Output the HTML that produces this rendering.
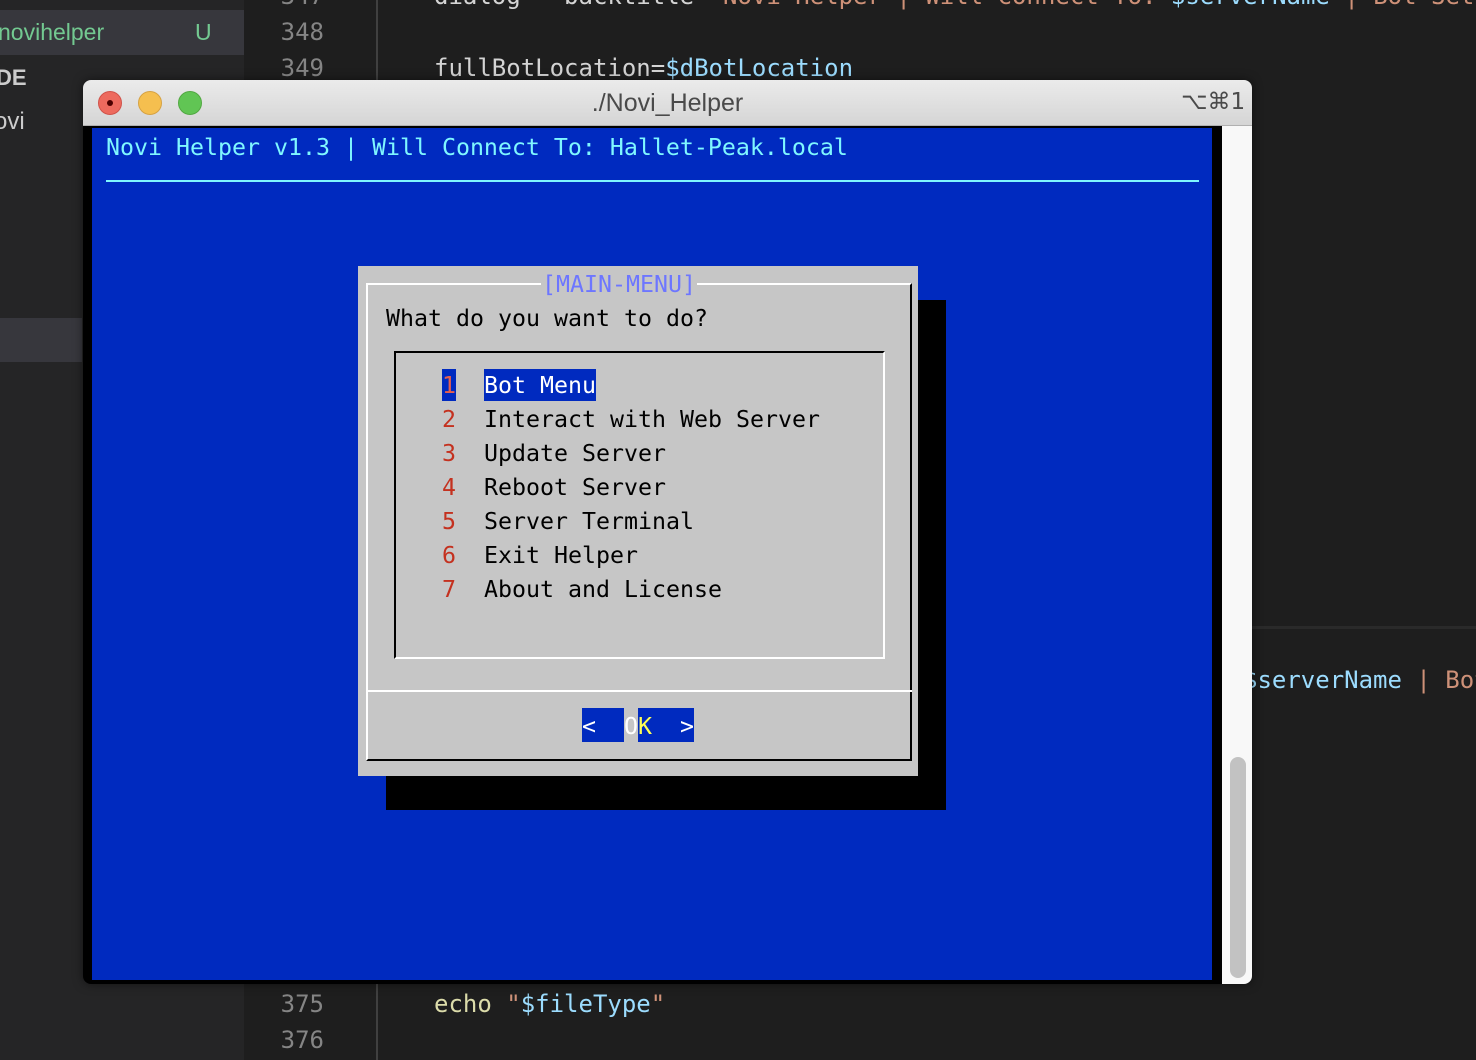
<!DOCTYPE html>
<html><head><meta charset="utf-8"><style>
*{margin:0;padding:0;box-sizing:border-box}
body{width:1476px;height:1060px;background:#1e1e1e;position:relative;overflow:hidden;font-family:"DejaVu Sans Mono","Liberation Mono",monospace}
.a{position:absolute;white-space:pre}
.code{font-size:24px;line-height:36px;color:#d4d4d4}
.ln{font-size:24px;line-height:36px;color:#858585;text-align:right;width:80px}
.t{font-size:23.25px;line-height:34px}
</style></head><body>
<div class="a" style="left:0;top:0;width:244px;height:1060px;background:#252526"></div>
<div class="a" style="left:0;top:10px;width:244px;height:45px;background:#37373d"></div>
<div class="a" style="left:0;top:318px;width:82px;height:44px;background:#37373d"></div>
<div class="a" style="left:-2px;top:19px;font-family:'Liberation Sans',sans-serif;font-size:23px;color:#73c991">novihelper</div>
<div class="a" style="left:195px;top:19px;font-family:'Liberation Sans',sans-serif;font-size:23px;color:#73c991">U</div>
<div class="a" style="left:-4px;top:65px;font-family:'Liberation Sans',sans-serif;font-size:22px;font-weight:bold;color:#ccc">DE</div>
<div class="a" style="left:-6px;top:108px;font-family:'Liberation Sans',sans-serif;font-size:24px;color:#ccc">ovi</div>
<div class="a" style="left:376px;top:0;width:2px;height:1060px;background:#404040"></div>
<div class="a ln" style="left:244px;top:-22px">347</div>
<div class="a ln" style="left:244px;top:14px">348</div>
<div class="a ln" style="left:244px;top:50px">349</div>
<div class="a ln" style="left:244px;top:986px">375</div>
<div class="a ln" style="left:244px;top:1022px">376</div>
<div class="a code" style="left:434px;top:-22px">dialog --backtitle <span style="color:#ce9178">"Novi Helper | Will Connect To: </span><span style="color:#9cdcfe">$serverName</span><span style="color:#ce9178"> | Bot Set</span></div>
<div class="a code" style="left:434px;top:50px">fullBotLocation=<span style="color:#9cdcfe">$dBotLocation</span></div>
<div class="a code" style="left:434px;top:986px"><span style="color:#dcdcaa">echo</span> <span style="color:#ce9178">"</span><span style="color:#9cdcfe">$fileType</span><span style="color:#ce9178">"</span></div>
<div class="a" style="left:1240px;top:626px;width:236px;height:3px;background:#2a2a2a"></div>
<div class="a code" style="left:1243px;top:662px"><span style="color:#9cdcfe">$serverName</span><span style="color:#ce9178"> | Bot</span></div>

<div class="a" style="left:83px;top:80px;width:1169px;height:904px;border-radius:8px;background:#000;overflow:hidden;box-shadow:0 0 10px rgba(0,0,0,.5)">
 <div class="a" style="left:0;top:0;width:1169px;height:46px;background:linear-gradient(#ebebeb,#d5d5d5);border-bottom:1px solid #b0b0b0"></div>
 <div class="a" style="left:15px;top:11px;width:24px;height:24px;border-radius:50%;background:#ed6a5e;border:1px solid #d0524a"></div>
 <div class="a" style="left:24px;top:20px;width:6px;height:6px;border-radius:50%;background:#4d0000"></div>
 <div class="a" style="left:55px;top:11px;width:24px;height:24px;border-radius:50%;background:#f5bf4f;border:1px solid #d6a243"></div>
 <div class="a" style="left:95px;top:11px;width:24px;height:24px;border-radius:50%;background:#61c554;border:1px solid #52a842"></div>
 <div class="a" style="left:0;top:9px;width:1169px;text-align:center;font-family:'Liberation Sans',sans-serif;font-size:25px;color:#4a4a4a">./Novi_Helper</div>
 <div class="a" style="left:1098px;top:9px;font-family:'DejaVu Sans','Liberation Sans',sans-serif;font-size:23px;color:#4a4a4a">⌥⌘1</div>
 <div class="a" style="left:1139px;top:46px;width:30px;height:858px;background:#f8f8f8"></div>
 <div class="a" style="left:1147px;top:677px;width:16px;height:221px;border-radius:8px;background:#c2c2c2"></div>
 <div class="a" style="left:9px;top:48px;width:1120px;height:852px;background:#002abf"></div>
</div>

<div class="a t" style="left:106px;top:131px;color:#7ff7ff">Novi Helper v1.3 | Will Connect To: Hallet-Peak.local</div>
<div class="a" style="left:106px;top:180px;width:1093px;height:2px;background:#7ff7ff"></div>

<div class="a" style="left:386px;top:300px;width:560px;height:510px;background:#000"></div>
<div class="a" style="left:358px;top:266px;width:560px;height:510px;background:#c6c6c6"></div>
<div class="a" style="left:366px;top:283px;width:546px;height:478px;border-top:2px solid #fff;border-left:2px solid #fff;border-right:2px solid #000;border-bottom:2px solid #000"></div>
<div class="a" style="left:366px;top:690px;width:546px;height:2px;background:#fff"></div>
<div class="a t" style="left:541px;top:268px;background:#c6c6c6;color:#6d76ff;padding:0 1px">[MAIN-MENU]</div>
<div class="a t" style="left:386px;top:302px;color:#000">What do you want to do?</div>
<div class="a" style="left:394px;top:351px;width:491px;height:308px;border-top:2px solid #000;border-left:2px solid #000;border-right:2px solid #fff;border-bottom:2px solid #fff"></div>
<div class="a" style="left:442px;top:369px;width:14px;height:32px;background:#002abf"></div>
<div class="a" style="left:484px;top:369px;width:112px;height:32px;background:#002abf"></div>
<div class="a t" style="left:442px;top:369px;color:#e8604d">1</div>
<div class="a t" style="left:484px;top:369px;color:#fff">Bot Menu</div>
<div class="a t" style="left:442px;top:403px;color:#c4311f">2
3
4
5
6
7</div>
<div class="a t" style="left:484px;top:403px;color:#000">Interact with Web Server
Update Server
Reboot Server
Server Terminal
Exit Helper
About and License</div>
<div class="a" style="left:582px;top:708px;width:42px;height:34px;background:#002abf"></div>
<div class="a" style="left:638px;top:708px;width:56px;height:34px;background:#002abf"></div>
<div class="a t" style="left:582px;top:710px;color:#fff">&lt;  O<span style="color:#ffff55">K</span>  &gt;</div>
</body></html>
